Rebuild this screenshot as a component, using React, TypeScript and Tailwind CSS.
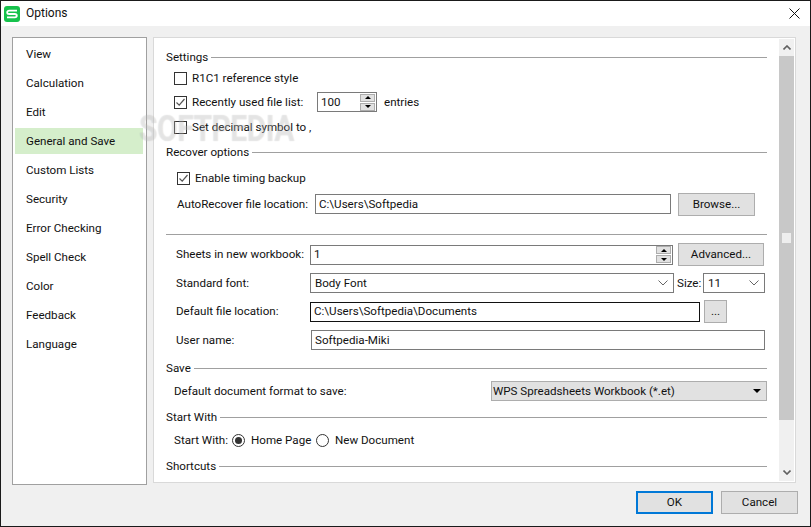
const font = { fontFamily: 'Roboto, "Noto Sans", sans-serif' };

const navItems = ['View', 'Calculation', 'Edit', 'General and Save', 'Custom Lists', 'Security', 'Error Checking', 'Spell Check', 'Color', 'Feedback', 'Language'];

function SectionHeader({ title, className = '' }: { title: string; className?: string }) {
  return (
    <div className={`flex h-5 items-center gap-[3px] ${className}`}>
      <span>{title}</span>
      <div className="h-px flex-1 bg-[#a0a0a0]" />
    </div>
  );
}

function Checkbox({ checked = false }: { checked?: boolean }) {
  return (
    <span className="flex h-[13px] w-[13px] shrink-0 items-center justify-center border border-[#333333] bg-white">
      {checked && (
        <svg width="11" height="11" viewBox="0 0 11 11" fill="none">
          <path d="M1.5 5.5 L4.2 8.2 L9.5 2" stroke="#555555" strokeWidth="1.2" />
        </svg>
      )}
    </span>
  );
}

function Radio({ checked = false }: { checked?: boolean }) {
  return (
    <span className="flex h-[13px] w-[13px] shrink-0 items-center justify-center rounded-full border border-[#333333] bg-white">
      {checked && <span className="h-[7px] w-[7px] rounded-full bg-[#333333]" />}
    </span>
  );
}

function Spinner() {
  return (
    <span className="flex w-[15px] shrink-0 flex-col gap-px">
      <span className="flex h-2 items-center justify-center border border-[#adadad] bg-[#e1e1e1]">
        <span className="h-0 w-0 border-x-[3px] border-b-[3px] border-x-transparent border-b-black" />
      </span>
      <span className="flex h-2 items-center justify-center border border-[#adadad] bg-[#e1e1e1]">
        <span className="h-0 w-0 border-x-[3px] border-t-[3px] border-x-transparent border-t-black" />
      </span>
    </span>
  );
}

function Chevron() {
  return (
    <svg width="10" height="6" viewBox="0 0 10 6" fill="none" className="shrink-0">
      <path d="M0.5 0.5 L5 5 L9.5 0.5" stroke="#666666" strokeWidth="1" />
    </svg>
  );
}

function Button({ label, className = '' }: { label: string; className?: string }) {
  return (
    <div className={`flex shrink-0 items-center justify-center border border-[#adadad] bg-[#e1e1e1] ${className}`}>
      {label}
    </div>
  );
}

export default function App() {
  return (
    <div
      style={font}
      className="relative flex h-[527px] w-[811px] flex-col overflow-hidden whitespace-nowrap border border-[#1a1a1a] bg-[#f0f0f0] text-[11.6px] leading-[15px] text-[#111111]"
    >
      {/* Title bar */}
      <div className="flex h-[25px] shrink-0 items-center bg-white pl-[3px] pr-[10px]">
        <svg width="16" height="16" viewBox="0 0 16 16" className="shrink-0">
          <rect width="16" height="16" rx="3" fill="#16c24c" />
          <path d="M13 4.6 H5.2 Q3.2 4.6 3.2 6.4 Q3.2 8 5.2 8 H10.8 Q12.8 8 12.8 9.6 Q12.8 11.4 10.8 11.4 H3" fill="none" stroke="white" strokeWidth="1.8" />
        </svg>
        <span className="ml-[6px] text-[12px]">Options</span>
        <svg width="11" height="11" viewBox="0 0 11 11" className="ml-auto" fill="none">
          <path d="M0.5 0.5 L10.5 10.5 M10.5 0.5 L0.5 10.5" stroke="#111111" strokeWidth="1" />
        </svg>
      </div>

      {/* Body */}
      <div className="flex h-[458px] shrink-0 gap-[6px] pl-[11px] pr-[14px] pt-[11px]">
        <div className="flex h-[448px] w-[135px] shrink-0 flex-col gap-[3px] border border-[#a0a0a0] bg-white pl-[2px] pr-[3px] pt-[3px]">
          {navItems.map((item) => (
            <div
              key={item}
              className={`flex h-[26px] shrink-0 items-center pl-[11px] ${item === 'General and Save' ? 'bg-[#d5eecb]' : ''}`}
            >
              {item}
            </div>
          ))}
        </div>

        <div className="flex h-[446px] flex-1 border border-[#d9d9d9] bg-white">
          <div className="flex min-w-0 flex-1 flex-col pl-[12px] pr-[12px] pt-[9px]">
            <SectionHeader title="Settings" />
            <div className="flex h-[23px] items-center gap-[5px] pl-2">
              <Checkbox />
              <span>R1C1 reference style</span>
            </div>
            <div className="flex h-6 items-center pl-2">
              <Checkbox checked />
              <span className="ml-[5px] w-[125px]">Recently used file list:</span>
              <div className="flex h-5 w-[60px] items-center justify-between border border-[#7a7a7a] pl-[3px] pr-px">
                <span>100</span>
                <Spinner />
              </div>
              <span className="ml-[7px]">entries</span>
            </div>
            <div className="flex h-[26px] items-center gap-[5px] pl-2">
              <Checkbox />
              <span>Set decimal symbol to ,</span>
            </div>

            <SectionHeader title="Recover options" className="my-0.5" />
            <div className="flex h-7 items-center gap-[5px] pl-[11px]">
              <Checkbox checked />
              <span>Enable timing backup</span>
            </div>
            <div className="flex h-6 items-center pl-[11px]">
              <span className="w-[138px]">AutoRecover file location:</span>
              <div className="flex h-5 w-[356px] items-center border border-[#7a7a7a] pl-[3px]">C:\Users\Softpedia</div>
              <Button label="Browse..." className="ml-[7px] h-[23px] w-[77px]" />
            </div>

            <div className="mb-[8px] mt-[18px] h-px bg-[#a0a0a0]" />

            <div className="flex h-[23px] items-center pl-[10px]">
              <span className="w-[134px]">Sheets in new workbook:</span>
              <div className="flex h-5 w-[363px] items-center justify-between border border-[#7a7a7a] pl-[3px] pr-px">
                <span>1</span>
                <Spinner />
              </div>
              <Button label="Advanced..." className="ml-[5px] h-[23px] w-[86px]" />
            </div>
            <div className="mt-[7px] flex h-5 items-center pl-[10px]">
              <span className="w-[134px]">Standard font:</span>
              <div className="flex h-5 w-[364px] items-center justify-between border border-[#7a7a7a] pl-[4px] pr-[5px]">
                <span>Body Font</span>
                <Chevron />
              </div>
              <span className="ml-[3px] w-[26px]">Size:</span>
              <div className="flex h-5 w-[62px] items-center justify-between border border-[#7a7a7a] pl-[4px] pr-[5px]">
                <span>11</span>
                <Chevron />
              </div>
            </div>
            <div className="mt-[7px] flex h-[23px] items-center pl-[10px]">
              <span className="w-[134px]">Default file location:</span>
              <div className="flex h-5 w-[390px] items-center border border-[#111111] pl-[3px]">C:\Users\Softpedia\Documents</div>
              <Button label="..." className="ml-1 h-[23px] w-[23px]" />
            </div>
            <div className="mt-[7px] flex h-5 items-center pl-[10px]">
              <span className="w-[135px]">User name:</span>
              <div className="mr-[2px] flex h-5 flex-1 items-center border border-[#7a7a7a] pl-[3px]">Softpedia-Miki</div>
            </div>

            <SectionHeader title="Save" className="mt-2" />
            <div className="mt-[3px] flex h-5 items-center pl-2">
              <span className="w-[317px]">Default document format to save:</span>
              <div className="flex h-5 flex-1 items-center justify-between border border-[#adadad] bg-[#e1e1e1] pl-[1px] pr-[5px]">
                <span>WPS Spreadsheets Workbook (*.et)</span>
                <span className="h-0 w-0 border-x-[4px] border-t-[4px] border-x-transparent border-t-black" />
              </div>
            </div>

            <SectionHeader title="Start With" className="mt-[6px]" />
            <div className="mt-[3px] flex h-5 items-center pl-2">
              <span className="w-[58px]">Start With:</span>
              <Radio checked />
              <span className="ml-[6px] w-[65px]">Home Page</span>
              <Radio />
              <span className="ml-[6px]">New Document</span>
            </div>

            <SectionHeader title="Shortcuts" className="mt-[6px]" />
          </div>

          {/* Scrollbar */}
          <div className="mb-px mr-px mt-px flex w-[15px] shrink-0 flex-col bg-[#f0f0f0]">
            <div className="flex h-[17px] shrink-0 items-center justify-center">
              <svg width="8" height="5" viewBox="0 0 8 5" fill="none">
                <path d="M0.5 4.5 L4 1 L7.5 4.5" stroke="#606060" strokeWidth="1.6" />
              </svg>
            </div>
            <div className="flex h-[364px] shrink-0 items-start justify-center bg-[#c8c8c8] pt-[177px]">
              <div className="h-[10px] w-[9px] bg-[#eeeeee]" />
            </div>
            <div className="mt-auto flex h-[17px] shrink-0 items-center justify-center">
              <svg width="8" height="5" viewBox="0 0 8 5" fill="none">
                <path d="M0.5 0.5 L4 4 L7.5 0.5" stroke="#606060" strokeWidth="1.6" />
              </svg>
            </div>
          </div>
        </div>
      </div>

      {/* Footer */}
      <div className="flex flex-1 justify-end gap-2 pr-[12px] pt-[7px]">
        <div className="flex h-[23px] w-[77px] items-center justify-center border-2 border-[#0078d7] bg-[#e1e1e1]">OK</div>
        <Button label="Cancel" className="h-[23px] w-[77px]" />
      </div>

      {/* Watermark */}
      <div className="pointer-events-none absolute left-[138px] top-[112px] scale-y-[1.25] text-[30px] font-bold leading-none tracking-[-0.5px] text-white/25 [text-shadow:0_0_1px_rgba(0,0,0,0.14)]">
        SOFTPEDIA
      </div>
    </div>
  );
}
